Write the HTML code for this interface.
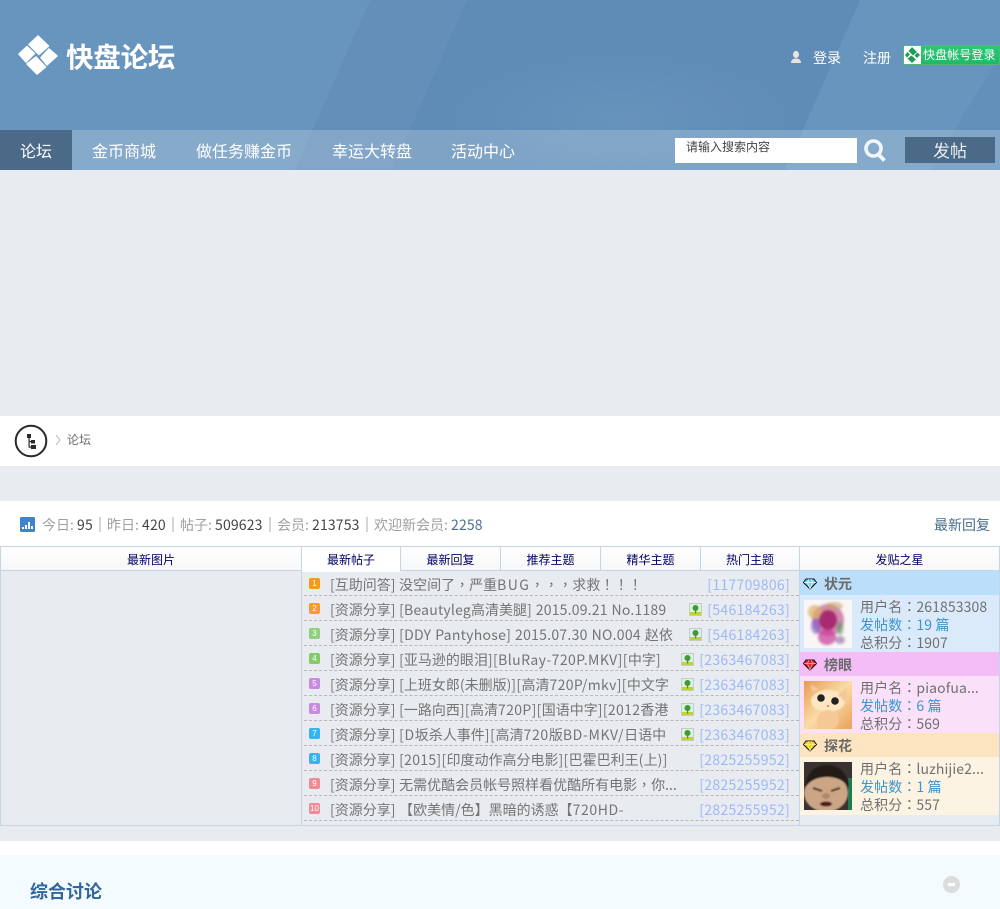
<!DOCTYPE html>
<html lang="zh-CN">
<head>
<meta charset="utf-8">
<title>快盘论坛</title>
<style>
html,body{margin:0;padding:0}
body{width:1000px;height:909px;overflow:hidden;position:relative;background:#e8ebf0;font-family:"Liberation Sans","Noto Sans CJK SC",sans-serif;font-size:14px;color:#666;text-spacing-trim:space-all}
.a{position:absolute;white-space:nowrap}
.cjk{font-family:"Noto Sans CJK SC",sans-serif}
.nav{top:130px;height:40px;line-height:41px;font-size:16px;color:#fff;font-family:"Noto Sans CJK SC",sans-serif}
.tab{top:547px;height:24px;line-height:25px;text-align:center;font-size:12px;color:#000066;background:linear-gradient(#fff,#f7f7f7);font-family:"Noto Sans CJK SC",sans-serif;box-sizing:border-box}
.line{left:304px;width:495px;height:0;border-bottom:1px dashed #b9b9b9}
.t{left:330px;font-size:14px;line-height:20px;color:#747474;font-family:"Noto Sans CJK SC",sans-serif;word-spacing:.5px}
.t i{font-style:normal}
.tc{font-family:"Noto Sans CJK TC",sans-serif}
.n{right:210px;font-size:14px;line-height:20px;color:#9db9f5;font-family:"Noto Sans CJK SC",sans-serif;letter-spacing:.3px}
.num{left:309px;width:11px;height:11px;border-radius:2px;color:#fff;font:8px/11px "Liberation Sans",sans-serif;text-align:center}
.pic{width:13px;height:13px}
.u{left:860px;font-size:14px;line-height:18px;color:#707070;font-family:"Noto Sans CJK SC",sans-serif;letter-spacing:.1px}
.b{color:#3a96cf}
.head{left:824px;font-size:14px;font-weight:bold;line-height:24px;color:#6a6a6a;font-family:"Noto Sans CJK SC",sans-serif}
.s{font-family:"Noto Sans CJK SC",sans-serif;font-size:14px;top:515px;line-height:20px;color:#a0a0a0}
.s b{font-weight:normal;color:#444;letter-spacing:.15px}
.sep{top:517px;width:2px;height:15px;background:#d6d6d6}
</style>
</head>
<body>
<svg class="a" style="left:0;top:0" width="1000" height="170" viewBox="0 0 1000 170">
<defs><radialGradient id="glow" cx=".5" cy=".5" r=".5"><stop offset="0" stop-color="#6b98bf" stop-opacity=".6"/><stop offset="1" stop-color="#6b98bf" stop-opacity="0"/></radialGradient></defs>
<rect width="1000" height="170" fill="#6895bd"/>
<polygon points="370,0 860,0 785,170 295,170" fill="#648fb9"/>
<polygon points="467,0 860,0 785,170 392,170" fill="#5f8cb7"/>
<ellipse cx="620" cy="120" rx="180" ry="70" fill="url(#glow)"/>
<polygon points="1000,55 1000,170 930,170" fill="#6390ba"/>
<rect y="130" width="1000" height="40" fill="#fff" fill-opacity=".2"/>
<rect y="130" width="72" height="40" fill="#4b6a88"/>
<g fill="#fff" stroke="#fff" stroke-width="1.500" stroke-linejoin="round">
<polygon points="38,36 48.500,46 39,54.500 29,44.500"/>
<polygon points="49,49 57,56 47,65 41,57.500"/>
<polygon points="36,57 45.500,67 37,74 27,64"/>
<polygon points="27,46.500 34.500,53.500 26,62 19,54"/>
</g>
</svg>
<div class="a cjk" style="left:66px;top:37px;font-size:27.500px;line-height:36px;font-weight:bold;color:#fff;letter-spacing:-.2px">快盘论坛</div>

<svg class="a" style="left:790px;top:50px" width="12" height="15" viewBox="0 0 12 15"><ellipse cx="6" cy="4.500" rx="3" ry="3.600" fill="#e8e4da"/><path d="M1 13c0-3 2-4.500 5-4.500s5 1.500 5 4.500z" fill="#e8e4da"/></svg>
<div class="a cjk" style="left:813px;top:48px;font-size:14px;line-height:20px;color:#fff">登录</div>
<div class="a cjk" style="left:863px;top:48px;font-size:14px;line-height:20px;color:#fff">注册</div>
<div class="a" style="left:903px;top:45px;width:97px;height:20px;box-sizing:border-box;border:1px solid #52b87c;background:linear-gradient(#2cc876,#22b866);border-radius:2px"></div>
<svg class="a" style="left:904px;top:46px" width="17" height="18" viewBox="0 0 17 18"><rect width="17" height="18" fill="#fff"/><g fill="#1f9d58"><polygon points="8,1 13,6 9,9.500 4.500,5"/><polygon points="8,17 3.500,12.500 7.500,9.500 12,13.500"/><polygon points="3.500,6 6,8.500 3,11.500 1,9"/><polygon points="13.500,6.500 16,9 13,12 10.500,9.500"/></g></svg>
<div class="a cjk" style="left:923px;top:46px;font-size:12px;line-height:18px;color:#fff;letter-spacing:.1px">快盘帐号登录</div>

<div class="a nav" style="left:20px">论坛</div>
<div class="a nav" style="left:92px">金币商城</div>
<div class="a nav" style="left:196px">做任务赚金币</div>
<div class="a nav" style="left:332px">幸运大转盘</div>
<div class="a nav" style="left:451px">活动中心</div>

<div class="a" style="left:675px;top:138px;width:182px;height:25px;background:#fff"></div>
<div class="a cjk" style="left:686px;top:138px;font-size:12px;line-height:17px;color:#444">请输入搜索内容</div>
<svg class="a" style="left:863px;top:138px" width="24" height="25" viewBox="0 0 24 25"><circle cx="10.500" cy="10.500" r="7.500" fill="none" stroke="#f1f6fb" stroke-width="3.600"/><path d="M15.500 16.500l6 6" stroke="#f1f6fb" stroke-width="3.800" fill="none"/></svg>
<div class="a cjk" style="left:905px;top:137px;width:90px;height:26px;line-height:25px;background:#4b6a88;color:#e9edf1;font-size:17px;text-align:center">发帖</div>

<!-- breadcrumb -->
<div class="a" style="left:0;top:416px;width:1000px;height:50px;background:#fff"></div>
<svg class="a" style="left:14px;top:424px" width="34" height="34" viewBox="0 0 34 34"><circle cx="17" cy="17" r="15.300" fill="#fff" stroke="#2a2a2a" stroke-width="2"/><g fill="#2a2a2a"><rect x="13" y="10" width="4" height="4"/><rect x="17" y="16" width="4" height="3.500"/><rect x="17" y="21" width="5" height="4"/><rect x="14.500" y="13" width="1.200" height="10"/><rect x="14.500" y="17" width="3" height="1.200"/><rect x="14.500" y="22.500" width="3" height="1.200"/></g></svg>
<svg class="a" style="left:54px;top:433px" width="8" height="14" viewBox="0 0 8 14"><path d="M2 2l4 5-4 5" fill="none" stroke="#bbb" stroke-width="1"/></svg>
<div class="a cjk" style="left:67px;top:431px;font-size:12px;line-height:18px;color:#6c6c6c">论坛</div>

<!-- stats -->
<div class="a" style="left:0;top:501px;width:1000px;height:45px;background:#fff"></div>
<svg class="a" style="left:20px;top:517px" width="15" height="15" viewBox="0 0 15 15"><rect width="15" height="15" rx="1.500" fill="#3f82cd"/><g fill="#fff"><rect x="2" y="10" width="2" height="2"/><rect x="5" y="8" width="2" height="4"/><rect x="8" y="5" width="2" height="7"/><rect x="11" y="9" width="2" height="3"/></g></svg>
<div class="a s" style="left:42px">今日: <b>95</b></div>
<div class="a sep" style="left:99px"></div>
<div class="a s" style="left:107px">昨日: <b>420</b></div>
<div class="a sep" style="left:172px"></div>
<div class="a s" style="left:180px">帖子: <b>509623</b></div>
<div class="a sep" style="left:269px"></div>
<div class="a s" style="left:277px">会员: <b>213753</b></div>
<div class="a sep" style="left:366px"></div>
<div class="a s" style="left:374px">欢迎新会员: <b style="color:#4a6d8f">2258</b></div>
<div class="a cjk" style="right:10px;top:515px;font-size:14px;line-height:20px;color:#4a6d8f">最新回复</div>

<!-- table -->
<div class="a" style="left:0;top:546px;width:1000px;height:280px;box-sizing:border-box;border:1px solid #c4d6e4;background:#e8ebf0"></div>
<div class="a tab" style="left:1px;width:300px;border-bottom:1px solid #c4d6e4">最新图片</div>
<div class="a" style="left:301px;top:547px;width:1px;height:278px;background:#c4d6e4"></div>
<div class="a tab" style="left:302px;width:98px;background:#fff;height:25px">最新帖子</div>
<div class="a tab" style="left:401px;width:99px;border-bottom:1px solid #c4d6e4">最新回复</div>
<div class="a tab" style="left:501px;width:99px;border-bottom:1px solid #c4d6e4">推荐主题</div>
<div class="a tab" style="left:601px;width:99px;border-bottom:1px solid #c4d6e4">精华主题</div>
<div class="a tab" style="left:701px;width:98px;border-bottom:1px solid #c4d6e4">热门主题</div>
<div class="a tab" style="left:800px;width:199px;border-bottom:1px solid #c4d6e4">发贴之星</div>
<div class="a" style="left:400px;top:547px;width:1px;height:24px;background:#c4d6e4"></div>
<div class="a" style="left:500px;top:547px;width:1px;height:24px;background:#c4d6e4"></div>
<div class="a" style="left:600px;top:547px;width:1px;height:24px;background:#c4d6e4"></div>
<div class="a" style="left:700px;top:547px;width:1px;height:24px;background:#c4d6e4"></div>
<div class="a" style="left:799px;top:547px;width:1px;height:278px;background:#c4d6e4"></div>

<!-- rows -->
<div class="a num" style="top:578px;background:#f99a17">1</div>
<div class="a t" style="top:575px">[互助问答] 没空间了<span class="tc" lang="zh-TW">，</span>严重<i style="letter-spacing:1.400px">BUG</i><span class="tc" lang="zh-TW">，，，</span>求救<span class="tc" lang="zh-TW">！！！</span></div>
<div class="a n" style="top:575px">[117709806]</div>
<div class="a line" style="top:595px"></div>

<div class="a num" style="top:603px;background:#f99a2e">2</div>
<div class="a t" style="top:600px">[资源分享] <i style="letter-spacing:.2px">[Beautyleg</i>高清美腿<i style="letter-spacing:.2px">] 2015.09.21 No.1189</i></div>
<svg class="a pic" style="left:689px;top:603px" viewBox="0 0 13 13"><rect width="13" height="13" fill="#c8ccb8"/><rect x="1" y="1" width="11" height="11" fill="#d8f0ee"/><rect x="1" y="9" width="11" height="3" fill="#b4d83a"/><circle cx="6.500" cy="5" r="3" fill="#3c9d2c"/><rect x="6" y="7" width="1.200" height="3.500" fill="#a8622a"/></svg>
<div class="a n" style="top:600px">[546184263]</div>
<div class="a line" style="top:620px"></div>

<div class="a num" style="top:628px;background:#8fd07f">3</div>
<div class="a t" style="top:625px">[资源分享] <i style="letter-spacing:.27px">[DDY Pantyhose] 2015.07.30 NO.004 </i>赵依</div>
<svg class="a pic" style="left:689px;top:628px" viewBox="0 0 13 13"><rect width="13" height="13" fill="#c8ccb8"/><rect x="1" y="1" width="11" height="11" fill="#d8f0ee"/><rect x="1" y="9" width="11" height="3" fill="#b4d83a"/><circle cx="6.500" cy="5" r="3" fill="#3c9d2c"/><rect x="6" y="7" width="1.200" height="3.500" fill="#a8622a"/></svg>
<div class="a n" style="top:625px">[546184263]</div>
<div class="a line" style="top:645px"></div>

<div class="a num" style="top:653px;background:#84cb6c">4</div>
<div class="a t" style="top:650px">[资源分享] [亚马逊的眼泪<i style="letter-spacing:.42px">][BluRay-720P.MKV][</i>中字]</div>
<svg class="a pic" style="left:681px;top:653px" viewBox="0 0 13 13"><rect width="13" height="13" fill="#c8ccb8"/><rect x="1" y="1" width="11" height="11" fill="#d8f0ee"/><rect x="1" y="9" width="11" height="3" fill="#b4d83a"/><circle cx="6.500" cy="5" r="3" fill="#3c9d2c"/><rect x="6" y="7" width="1.200" height="3.500" fill="#a8622a"/></svg>
<div class="a n" style="top:650px">[2363467083]</div>
<div class="a line" style="top:670px"></div>

<div class="a num" style="top:678px;background:#c78be0">5</div>
<div class="a t" style="top:675px">[资源分享] [上班女郎(未删版)<i style="letter-spacing:.35px">][</i>高清<i style="letter-spacing:.35px">720P/mkv][</i>中文字</div>
<svg class="a pic" style="left:681px;top:678px" viewBox="0 0 13 13"><rect width="13" height="13" fill="#c8ccb8"/><rect x="1" y="1" width="11" height="11" fill="#d8f0ee"/><rect x="1" y="9" width="11" height="3" fill="#b4d83a"/><circle cx="6.500" cy="5" r="3" fill="#3c9d2c"/><rect x="6" y="7" width="1.200" height="3.500" fill="#a8622a"/></svg>
<div class="a n" style="top:675px">[2363467083]</div>
<div class="a line" style="top:695px"></div>

<div class="a num" style="top:703px;background:#c78be0">6</div>
<div class="a t" style="top:700px">[资源分享] [一路向西<i style="letter-spacing:.35px">][</i>高清<i style="letter-spacing:.35px">720P][</i>国语中字<i style="letter-spacing:.35px">][2012</i>香港</div>
<svg class="a pic" style="left:681px;top:703px" viewBox="0 0 13 13"><rect width="13" height="13" fill="#c8ccb8"/><rect x="1" y="1" width="11" height="11" fill="#d8f0ee"/><rect x="1" y="9" width="11" height="3" fill="#b4d83a"/><circle cx="6.500" cy="5" r="3" fill="#3c9d2c"/><rect x="6" y="7" width="1.200" height="3.500" fill="#a8622a"/></svg>
<div class="a n" style="top:700px">[2363467083]</div>
<div class="a line" style="top:720px"></div>

<div class="a num" style="top:728px;background:#35b5ee">7</div>
<div class="a t" style="top:725px">[资源分享] <i style="letter-spacing:.65px">[D</i>坂杀人事件<i style="letter-spacing:.65px">][</i>高清<i style="letter-spacing:.65px">720</i>版<i style="letter-spacing:.65px">BD-MKV/</i>日语中</div>
<svg class="a pic" style="left:681px;top:728px" viewBox="0 0 13 13"><rect width="13" height="13" fill="#c8ccb8"/><rect x="1" y="1" width="11" height="11" fill="#d8f0ee"/><rect x="1" y="9" width="11" height="3" fill="#b4d83a"/><circle cx="6.500" cy="5" r="3" fill="#3c9d2c"/><rect x="6" y="7" width="1.200" height="3.500" fill="#a8622a"/></svg>
<div class="a n" style="top:725px">[2363467083]</div>
<div class="a line" style="top:745px"></div>

<div class="a num" style="top:753px;background:#35b5ee">8</div>
<div class="a t" style="top:750px">[资源分享] <i style="letter-spacing:.3px">[2015][</i>印度动作高分电影<i style="letter-spacing:.3px">][</i>巴霍巴利王<i style="letter-spacing:.3px">(</i>上<i style="letter-spacing:.3px">)]</i></div>
<div class="a n" style="top:750px">[2825255952]</div>
<div class="a line" style="top:770px"></div>

<div class="a num" style="top:778px;background:#f28a94">9</div>
<div class="a t" style="top:775px">[资源分享] 无需优酷会员帐号照样看优酷所有电影<span class="tc" lang="zh-TW">，</span>你...</div>
<div class="a n" style="top:775px">[2825255952]</div>
<div class="a line" style="top:795px"></div>

<div class="a num" style="top:803px;background:#f28a94">10</div>
<div class="a t" style="top:800px">[资源分享] 【欧美情/色】黑暗的诱惑【<i style="letter-spacing:.6px">720HD-</i></div>
<div class="a n" style="top:800px">[2825255952]</div>
<div class="a line" style="top:820px"></div>

<!-- stars -->
<div class="a" style="left:800px;top:571px;width:199px;height:24px;background:#bbdefb"></div>
<div class="a" style="left:800px;top:595px;width:199px;height:57px;background:#dbeafb"></div>
<div class="a" style="left:800px;top:652px;width:199px;height:24px;background:#f4bdf7"></div>
<div class="a" style="left:800px;top:676px;width:199px;height:57px;background:#fae0f9"></div>
<div class="a" style="left:800px;top:733px;width:199px;height:24px;background:#fbe4bf"></div>
<div class="a" style="left:800px;top:757px;width:199px;height:58px;background:#fcf3e3"></div>

<svg class="a" style="left:803px;top:578px" width="14" height="12" viewBox="0 0 14 12"><path d="M3 1h8l2.500 3.500L7 11 .5 4.500z" fill="#6fd0f5" stroke="#111" stroke-width="1"/><path d="M1 4.500h12M7 11L4.500 4.500 6 1M7 11l2.500-6.500L8 1" stroke="#fff" stroke-width=".7" fill="none"/></svg>
<svg class="a" style="left:803px;top:659px" width="14" height="12" viewBox="0 0 14 12"><path d="M3 1h8l2.500 3.500L7 11 .5 4.500z" fill="#e8202c" stroke="#111" stroke-width="1"/><path d="M1 4.500h12M7 11L4.500 4.500 6 1M7 11l2.500-6.500L8 1" stroke="#ffb0b0" stroke-width=".7" fill="none"/></svg>
<svg class="a" style="left:803px;top:740px" width="14" height="12" viewBox="0 0 14 12"><path d="M3 1h8l2.500 3.500L7 11 .5 4.500z" fill="#f8cf1c" stroke="#111" stroke-width="1"/><path d="M1 4.500h12M7 11L4.500 4.500 6 1M7 11l2.500-6.500L8 1" stroke="#fff3a0" stroke-width=".7" fill="none"/></svg>
<div class="a head" style="top:572px">状元</div>
<div class="a head" style="top:653px">榜眼</div>
<div class="a head" style="top:734px">探花</div>

<svg class="a" style="left:804px;top:600px" width="48" height="48" viewBox="0 0 48 48">
<defs><filter id="bl"><feGaussianBlur stdDeviation="1.200"/></filter></defs>
<rect width="48" height="48" fill="#f8f6f6"/>
<g filter="url(#bl)">
<ellipse cx="24" cy="20" rx="16" ry="16" fill="#c0508c" opacity=".65"/>
<ellipse cx="11" cy="12" rx="7" ry="7" fill="#dcb060" opacity=".7"/>
<ellipse cx="30" cy="6" rx="9" ry="4" fill="#c8a060" opacity=".55"/>
<ellipse cx="12" cy="26" rx="5" ry="8" fill="#7b58c0" opacity=".6"/>
<ellipse cx="24" cy="20" rx="9" ry="10" fill="#a82a70"/>
<ellipse cx="23" cy="37" rx="9" ry="8" fill="#c63a96" opacity=".7"/>
<ellipse cx="36" cy="28" rx="3.500" ry="7" fill="#5d9a60" opacity=".6"/>
<ellipse cx="36" cy="40" rx="5" ry="4" fill="#8a5a9a" opacity=".55"/>
</g>
</svg>
<svg class="a" style="left:804px;top:681px" width="48" height="48" viewBox="0 0 48 48">
<defs><linearGradient id="g2" x1="0" y1="0" x2="1" y2="1"><stop offset="0" stop-color="#e69a50"/><stop offset=".5" stop-color="#fbdca6"/><stop offset="1" stop-color="#e8a05a"/></linearGradient><filter id="b2"><feGaussianBlur stdDeviation=".8"/></filter></defs>
<rect width="48" height="48" fill="url(#g2)"/>
<g filter="url(#b2)">
<ellipse cx="24" cy="20" rx="17" ry="11" fill="#fde6c4"/>
<path d="M34 14l9-8-1 16zM9 12L6 3l9 5z" fill="#f3c79a"/>
<ellipse cx="24" cy="39" rx="11" ry="10" fill="#f6c896"/>
</g>
<circle cx="17" cy="17" r="3.800" fill="#222"/><circle cx="31" cy="20" r="3.800" fill="#222"/>
<circle cx="24" cy="25" r="1.200" fill="#e88a7a"/>
</svg>
<svg class="a" style="left:804px;top:762px" width="48" height="48" viewBox="0 0 48 48">
<defs><filter id="b3"><feGaussianBlur stdDeviation=".7"/></filter></defs>
<rect width="48" height="48" fill="#3a3230"/>
<rect x="44" y="16" width="4" height="32" fill="#1f7a50"/>
<g filter="url(#b3)">
<ellipse cx="22" cy="31" rx="22" ry="19" fill="#cba586"/>
<path d="M1 26C2 10 12 3 23 3s21 7 22 23c-5-8-13-11-22-11S6 18 1 26z" fill="#221a18"/>
<path d="M9 26l9 3M36 26l-9 3" stroke="#4a3326" stroke-width="2"/>
<ellipse cx="22" cy="34" rx="4" ry="3" fill="#b48668"/>
<ellipse cx="22" cy="42" rx="6" ry="2.500" fill="#4a1f1a"/>
</g>
</svg>

<div class="a u" style="top:598px">用户名<span class="tc" lang="zh-TW">：</span>261853308</div>
<div class="a u b" style="top:616px">发帖数<span class="tc" lang="zh-TW">：</span>19 篇</div>
<div class="a u" style="top:634px">总积分<span class="tc" lang="zh-TW">：</span>1907</div>
<div class="a u" style="top:679px">用户名<span class="tc" lang="zh-TW">：</span>piaofua...</div>
<div class="a u b" style="top:697px">发帖数<span class="tc" lang="zh-TW">：</span>6 篇</div>
<div class="a u" style="top:715px">总积分<span class="tc" lang="zh-TW">：</span>569</div>
<div class="a u" style="top:760px">用户名<span class="tc" lang="zh-TW">：</span>luzhijie2...</div>
<div class="a u b" style="top:778px">发帖数<span class="tc" lang="zh-TW">：</span>1 篇</div>
<div class="a u" style="top:796px">总积分<span class="tc" lang="zh-TW">：</span>557</div>

<!-- section -->
<div class="a" style="left:0;top:841px;width:1000px;height:14px;background:#fff"></div>
<div class="a" style="left:0;top:855px;width:1000px;height:54px;background:#f3fbff"></div>
<div class="a cjk" style="left:30px;top:878px;font-size:18px;line-height:26px;font-weight:bold;color:#336699">综合讨论</div>
<div class="a" style="left:943px;top:876px;width:17px;height:17px;border-radius:50%;background:#dcdcdc"></div>
<div class="a" style="left:948px;top:883px;width:7px;height:3px;background:#fff"></div>
</body>
</html>
